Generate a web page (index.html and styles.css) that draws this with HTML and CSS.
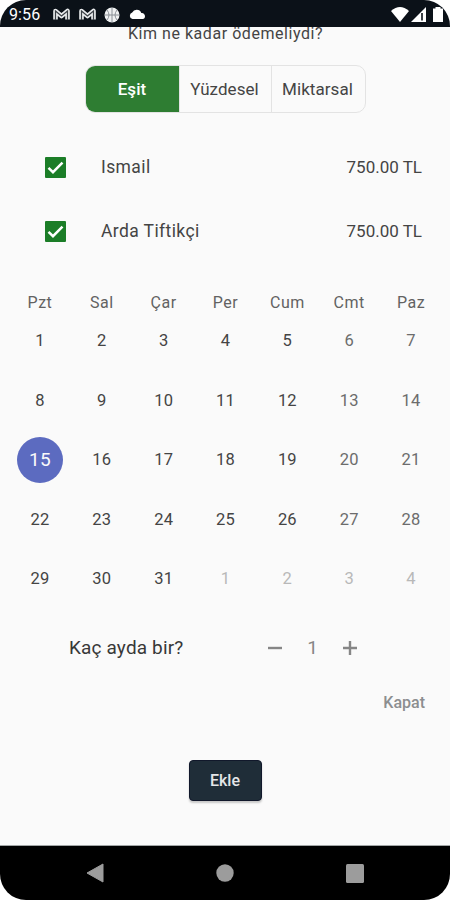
FILE: index.html
```html
<!DOCTYPE html>
<html lang="tr">
<head>
    <meta charset="UTF-8">
    <meta name="viewport" content="width=device-width, initial-scale=1.0">
    <title>Harcama Ekle</title>
    <link rel="stylesheet" href="styles.css">
</head>
<body>
    <div class="phone">
        <header class="status-bar">
            <span class="clock">9:56</span>
            <div class="notifications">
                <svg width="17" height="14" viewBox="0 0 17 14"><path d="M2.500 11.500V3l6 5 6-5v8.500" fill="none" stroke="#e8eaec" stroke-width="4.600" stroke-linejoin="round"/><path d="M2.500 12V3l6 5 6-5v9" fill="none" stroke="#3b4046" stroke-width="1.200"/></svg>
                <svg width="17" height="14" viewBox="0 0 17 14"><path d="M2.500 11.500V3l6 5 6-5v8.500" fill="none" stroke="#e8eaec" stroke-width="4.600" stroke-linejoin="round"/><path d="M2.500 12V3l6 5 6-5v9" fill="none" stroke="#3b4046" stroke-width="1.200"/></svg>
                <svg width="16" height="16" viewBox="0 0 16 16"><circle cx="8" cy="8" r="7.500" fill="#eef0f1"/><path d="M8 1v14M1 8h14M3 3q4 5 0 10M13 3q-4 5 0 10" fill="none" stroke="#8a9096" stroke-width="1"/></svg>
                <svg class="cloud" width="17" height="10" viewBox="0 0 17 10"><path d="M3.500 10a3.300 3.300 0 0 1-.3-6.400A5 5 0 0 1 12.300 4 3.050 3.050 0 0 1 13.500 10z" fill="#fff"/></svg>
            </div>
            <div class="signals">
                <svg width="18" height="15" viewBox="0 0 18 15"><path d="M0 4Q9-4 18 4L9 15z" fill="#fff"/></svg>
                <svg width="15" height="15" viewBox="0 0 15 15"><path d="M15 0v15H0z" fill="#fff"/><path d="M11 6v7.500" stroke="#0b1118" stroke-width="1.600"/></svg>
                <svg class="battery" width="10" height="15" viewBox="0 0 10 15"><path d="M2.500 0h5v1.500H10V15H0V1.500h2.500z" fill="#fff"/></svg>
            </div>
        </header>
        <main>
            <h1>Kim ne kadar ödemeliydi?</h1>
            <div class="segments">
                <button class="segment active">Eşit</button>
                <button class="segment">Yüzdesel</button>
                <button class="segment">Miktarsal</button>
            </div>
            <ul class="people">
                <li>
                    <svg class="check" width="21" height="21" viewBox="0 0 21 21"><rect width="21" height="21" rx="1" fill="#1b7d27"/><path d="M3.500 10.800l4.500 4.400L17.500 5.700" fill="none" stroke="#fff" stroke-width="2.500"/></svg>
                    <span class="name">Ismail</span>
                    <span class="amount">750.00 TL</span>
                </li>
                <li>
                    <svg class="check" width="21" height="21" viewBox="0 0 21 21"><rect width="21" height="21" rx="1" fill="#1b7d27"/><path d="M3.500 10.800l4.500 4.400L17.500 5.700" fill="none" stroke="#fff" stroke-width="2.500"/></svg>
                    <span class="name">Arda Tiftikçi</span>
                    <span class="amount">750.00 TL</span>
                </li>
            </ul>
            <div class="weekdays">
                <span>Pzt</span><span>Sal</span><span>Çar</span><span>Per</span><span>Cum</span><span>Cmt</span><span>Paz</span>
            </div>
            <div class="days">
                <span>1</span><span>2</span><span>3</span><span>4</span><span>5</span><span class="weekend">6</span><span class="weekend">7</span>
                <span>8</span><span>9</span><span>10</span><span>11</span><span>12</span><span class="weekend">13</span><span class="weekend">14</span>
                <span class="selected">15</span><span>16</span><span>17</span><span>18</span><span>19</span><span class="weekend">20</span><span class="weekend">21</span>
                <span>22</span><span>23</span><span>24</span><span>25</span><span>26</span><span class="weekend">27</span><span class="weekend">28</span>
                <span>29</span><span>30</span><span>31</span><span class="outside">1</span><span class="outside">2</span><span class="outside">3</span><span class="outside">4</span>
            </div>
            <div class="repeat">
                <span class="repeat-label">Kaç ayda bir?</span>
                <div class="stepper">
                    <svg width="14" height="14" viewBox="0 0 14 14"><path d="M0 7h14" stroke="#868686" stroke-width="2.400"/></svg>
                    <span>1</span>
                    <svg width="14" height="14" viewBox="0 0 14 14"><path d="M0 7h14M7 0v14" stroke="#868686" stroke-width="2.400"/></svg>
                </div>
            </div>
            <button class="close">Kapat</button>
            <button class="add">Ekle</button>
        </main>
        <footer class="nav-bar">
            <svg width="18" height="20" viewBox="0 0 18 20"><path d="M17 1v18L1 10z" fill="#9c9c9c" stroke="#9c9c9c" stroke-linejoin="round"/></svg>
            <svg width="18" height="18" viewBox="0 0 18 18"><circle cx="9" cy="9" r="8.700" fill="#9c9c9c"/></svg>
            <svg width="18" height="19" viewBox="0 0 18 19"><rect width="18" height="19" rx="1.500" fill="#9c9c9c"/></svg>
        </footer>
    </div>
</body>
</html>
```

FILE: styles.css
```css
* {
    box-sizing: border-box;
}

body {
    margin: 0;
    background-color: #fff;
    color: #444;
    font-family: Roboto, "Liberation Sans", sans-serif;
    font-size: 17px;
}

button {
    border: none;
    padding: 0;
    background: none;
    color: inherit;
    font: inherit;
}

svg {
    display: block;
    flex: none;
}

.phone {
    display: flex;
    flex-direction: column;
    width: 450px;
    height: 900px;
    border-radius: 26px;
    overflow: hidden;
    background-color: #fafafa;
}

/* Status bar */
.status-bar {
    display: flex;
    align-items: center;
    flex: none;
    height: 27px;
    padding: 2px 7px 0 9px;
    background-color: #0b1118;
    color: #fff;
}

.clock {
    width: 44px;
    font-size: 16px;
    letter-spacing: 0.1px;
}

.notifications {
    display: flex;
    align-items: center;
    gap: 8.5px;
}

.cloud {
    margin-top: -2px;
}

.signals {
    display: flex;
    gap: 2px;
    margin-left: auto;
}

.battery {
    margin-left: 5px;
}

/* Content */
main {
    display: flex;
    flex-direction: column;
    flex: 1;
    overflow: hidden;
    border-bottom: 1px solid #a2a6a6;
}

h1 {
    margin: -3px 0 0 1px;
    height: 20px;
    font-size: 16px;
    font-weight: 400;
    line-height: 20px;
    letter-spacing: 0.55px;
    text-align: center;
}

.segments {
    display: grid;
    grid-template-columns: 93px 92px 94px;
    align-self: center;
    width: 281px;
    height: 48px;
    margin: 21px 0 0 1px;
    border: 1px solid #e3e3e3;
    border-radius: 10px;
    overflow: hidden;
}

.segment {
    border-left: 1px solid #e3e3e3;
    padding-right: 2px;
    font-size: 17px;
    letter-spacing: 0.05px;
}

.segment.active {
    margin: -1px 0 -1px -1px;
    border: none;
    padding: 0;
    background-color: #2e7d32;
    color: #fff;
    font-weight: 500;
}

.people {
    margin: 22px 0 0;
    padding: 0 28px 0 45px;
    list-style: none;
}

.people li {
    display: flex;
    align-items: center;
    height: 64px;
}

.name {
    margin-left: 35px;
    font-size: 17.5px;
    letter-spacing: 0.4px;
}

.amount {
    margin-left: auto;
    font-size: 17px;
}

/* Calendar */
.weekdays,
.days {
    display: grid;
    grid-template-columns: repeat(7, 1fr);
    margin: 0 8px 0 9px;
    text-align: center;
}

.weekdays {
    height: 20px;
    margin-top: 30px;
    color: #626262;
    font-size: 16px;
    line-height: 20px;
    letter-spacing: 0.5px;
}

.days {
    grid-auto-rows: 59.5px;
    align-items: center;
    justify-items: center;
    margin-top: -2px;
}

.days span {
    font-size: 16.5px;
    letter-spacing: 0.2px;
}

.days .weekend {
    color: #6c6c6c;
}

.days .outside {
    color: #b8b8b8;
}

.days .selected {
    width: 46px;
    height: 46px;
    border-radius: 50%;
    background-color: #5c6bc0;
    color: #fafafa;
    font-size: 19px;
    line-height: 46px;
}

/* Repeat interval */
.repeat {
    display: flex;
    align-items: center;
    height: 40px;
    margin-top: 19px;
    padding: 0 93px 0 69px;
}

.repeat-label {
    font-size: 19px;
    letter-spacing: 0.15px;
    color: #383838;
}

.stepper {
    display: flex;
    align-items: center;
    gap: 25px;
    margin-left: auto;
    color: #868686;
    font-size: 19px;
}

.close {
    align-self: flex-end;
    height: 20px;
    margin: 25px 25px 0 0;
    color: #8c8e90;
    font-size: 16px;
    font-weight: 500;
    line-height: 20px;
    letter-spacing: 0;
}

.add {
    align-self: center;
    width: 73px;
    height: 41px;
    margin-top: 47px;
    border: 1px solid #11182b;
    border-radius: 4px;
    background-color: #1f2d38;
    box-shadow: 0 2px 2px rgba(0, 0, 0, 0.2);
    color: #e4e6e8;
    font-size: 16px;
    font-weight: 500;
}

/* Navigation bar */
.nav-bar {
    display: flex;
    align-items: center;
    justify-content: space-between;
    flex: none;
    height: 54px;
    padding: 0 86px;
    background-color: #000;
}
```
